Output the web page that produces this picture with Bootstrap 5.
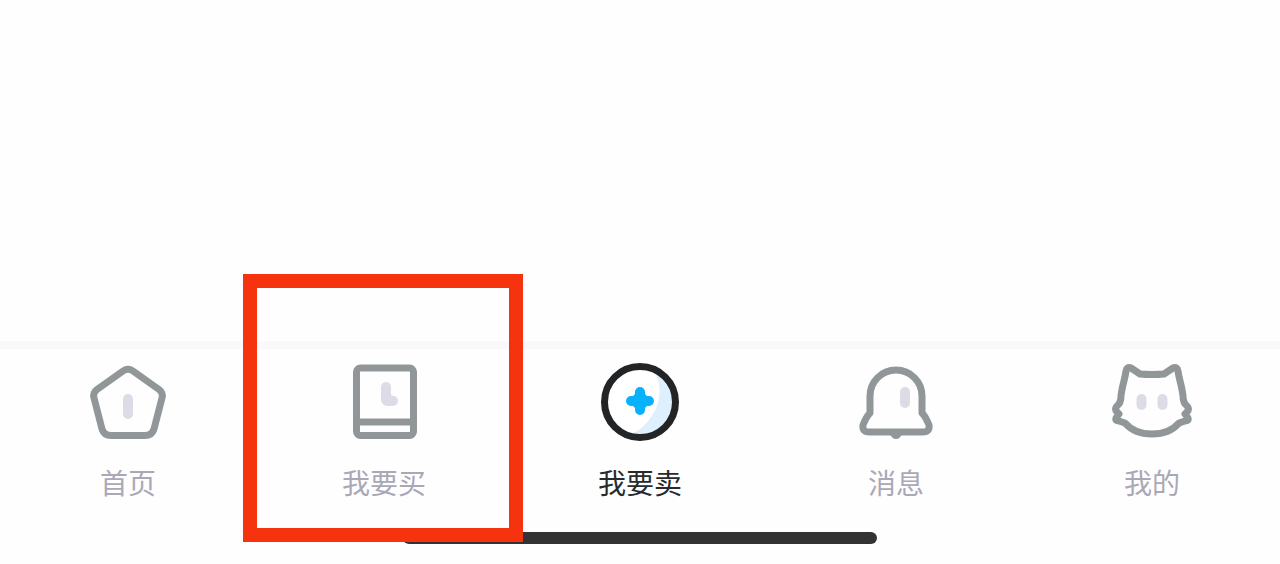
<!DOCTYPE html>
<html lang="zh-CN">
<head>
<meta charset="utf-8">
<meta name="viewport" content="width=device-width, initial-scale=1">
<title>我要卖</title>
<link href="https://cdn.jsdelivr.net/npm/bootstrap@5.3.0/dist/css/bootstrap.min.css" rel="stylesheet">
<style>
body { font-family: "Noto Sans CJK SC", sans-serif; background: #fefefe; }
.tab-bar { border-top: 8px solid #f9f9fa; }
.tab-link { color: #aaa8b7; font-size: 28px; line-height: 32px; padding-top: 5px; gap: 16px; }
.tab-link.active { color: #292a2c; }
.tab-link svg { width: 96px; height: 96px; fill: none; stroke-linecap: round; stroke-linejoin: round; }
.line { stroke: #919699; stroke-width: 7; }
.soft { stroke: #dddbe6; stroke-width: 10; }
.highlight { border: 14px solid #f5330f; top: -75px; bottom: -44px; left: -13px; right: -11px; z-index: 2; pointer-events: none; }
.home-indicator { width: 37%; height: 12px; background: #333; margin: 34px auto 20px; }
</style>
</head>
<body class="min-vh-100 d-flex flex-column overflow-x-hidden">
<main class="flex-grow-1"></main>
<nav class="tab-bar" aria-label="主导航">
  <ul class="row g-0 list-unstyled mb-0">
    <li class="col">
      <a href="#" class="tab-link d-flex flex-column align-items-center text-decoration-none">
        <svg viewBox="0 0 96 96" aria-hidden="true">
          <path class="line" d="M43 17Q48 13.500 53 17L79 35.500Q83.500 39 82 44L74 75Q72 81.500 65 81.500H31Q24 81.500 22 75L14 44Q12.500 39 17 35.500Z"/>
          <path class="soft" d="M48 45V60"/>
        </svg>
        <span>首页</span>
      </a>
    </li>
    <li class="col position-relative">
      <a href="#" class="tab-link d-flex flex-column align-items-center text-decoration-none">
        <svg viewBox="0 0 96 96" aria-hidden="true">
          <rect class="line" x="20.500" y="14" width="57" height="67.500" rx="4"/>
          <path class="line" d="M20.500 68H77.500"/>
          <path class="soft" d="M50 33V46L51 47H57"/>
          <path fill="#dddbe6" d="M54 38Q54 42 58 42L54 44Z"/>
        </svg>
        <span>我要买</span>
      </a>
      <div class="highlight position-absolute"></div>
    </li>
    <li class="col">
      <a href="#" class="tab-link active d-flex flex-column align-items-center text-decoration-none" aria-current="page">
        <svg viewBox="0 0 96 96" aria-hidden="true">
          <circle cx="48" cy="48" r="35" fill="#fff"/>
          <path fill="#deeffd" d="M62 16C70 30 69 48 61 60C55 70 48 77 38 80A34 34 0 0 0 62 16Z"/>
          <circle cx="48" cy="48" r="35.500" stroke="#222426" stroke-width="7"/>
          <path stroke="#08b1fc" stroke-width="10" d="M48 38V56M39 47H57"/>
          <path fill="#08b1fc" d="M43 40H53L55 42V52L53 54H43L41 52V42Z"/>
        </svg>
        <span>我要卖</span>
      </a>
    </li>
    <li class="col">
      <a href="#" class="tab-link d-flex flex-column align-items-center text-decoration-none">
        <svg viewBox="0 0 96 96" aria-hidden="true">
          <path class="line" d="M22 59V42A26 26 0 0 1 74 42V59C77 62 79 66 81 71Q82 78 75 78H21Q14 78 15 71C17 66 19 62 22 59Z"/>
          <path fill="#919699" d="M42 80H54Q52 85 48 85T42 80Z"/>
          <path class="soft" d="M57 38V49"/>
        </svg>
        <span>消息</span>
      </a>
    </li>
    <li class="col">
      <a href="#" class="tab-link d-flex flex-column align-items-center text-decoration-none">
        <svg viewBox="0 0 96 96" aria-hidden="true">
          <path class="line" d="M36 20L27 14Q23 12 22 17C21 25 18 32 17 42Q17 49 13 52Q10 55 13 58L15 60L12 64Q11 67 15 67L21 69C27 76 36 80 48 80S69 76 75 69L81 67Q85 67 84 64L81 60L83 58Q86 55 83 52Q79 49 79 42C78 32 75 25 74 17Q73 12 69 14L60 20Q48 21 36 20Z"/>
          <path class="soft" d="M37.500 45V51M58.500 45V51"/>
        </svg>
        <span>我的</span>
      </a>
    </li>
  </ul>
  <div class="home-indicator rounded-pill"></div>
</nav>
<script src="https://cdn.jsdelivr.net/npm/bootstrap@5.3.0/dist/js/bootstrap.bundle.min.js"></script>
</body>
</html>
